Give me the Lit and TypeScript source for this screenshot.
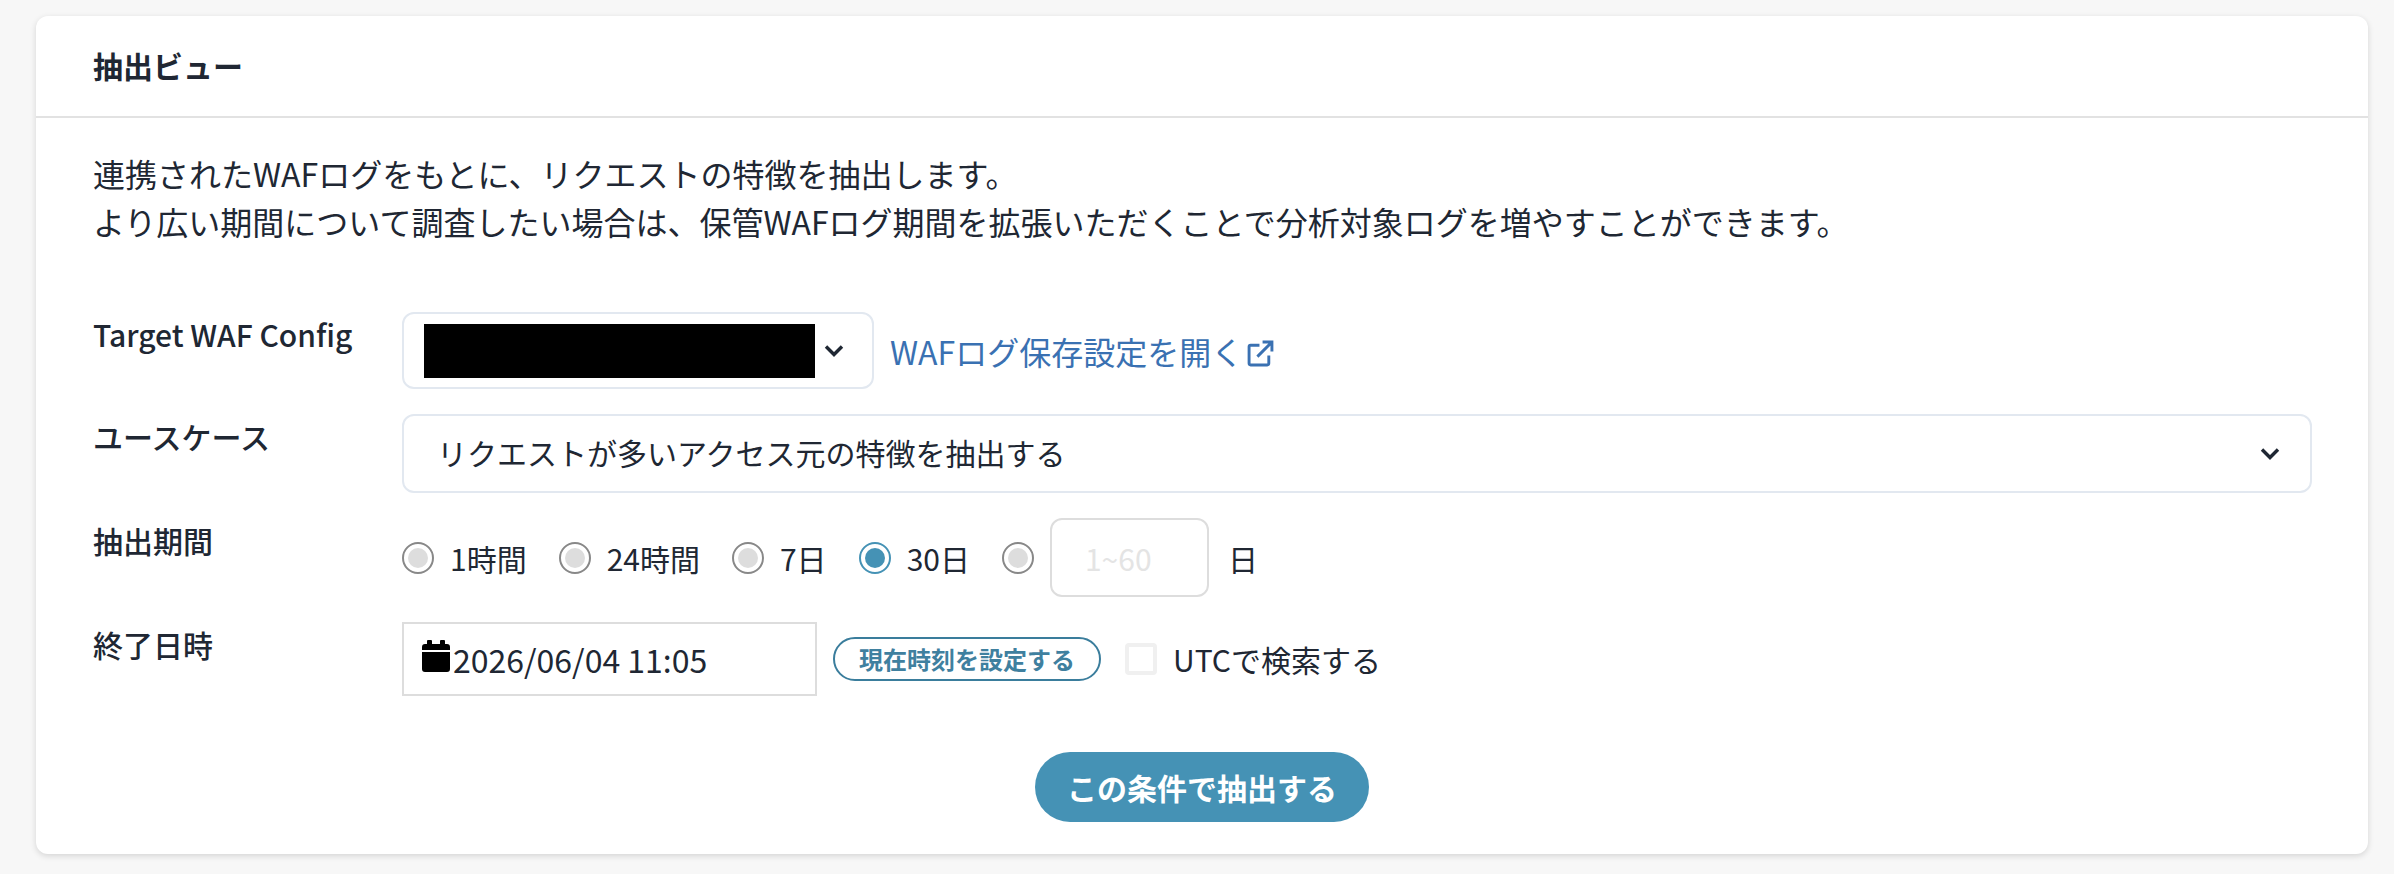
import { LitElement, html, css } from "lit";
import { customElement } from "lit/decorators.js";

const chevron = html`<svg class="chev" viewBox="0 0 20 14" width="20" height="14"><path d="M2 2.5 L10 10.5 L18 2.5" fill="none" stroke="#1f2733" stroke-width="3.4"/></svg>`;

@customElement("app-root")
export class AppRoot extends LitElement {
  static styles = css`
    :host {
      display: block;
      min-height: 874px;
      box-sizing: border-box;
      background: #f7f7f7;
      padding: 16px 26px 20px 36px;
      font-family: "Noto Sans CJK JP", "Noto Sans", sans-serif;
      color: #202733;
      font-size: 32px;
      line-height: 48px;
    }
    .card {
      background: #fff;
      border-radius: 12px;
      box-shadow: 0 2px 6px rgba(0, 0, 0, 0.14);
    }
    .head {
      height: 102px;
      box-sizing: border-box;
      border-bottom: 2px solid #e2e2e2;
      padding: 0 57px 2px;
      display: flex;
      align-items: center;
      font-size: 30px;
      font-weight: 700;
    }
    .body { padding: 31px 57px 32px; }
    .intro { margin: 0 0 67px; }
    .form {
      display: grid;
      grid-template-columns: 309px 1fr;
      row-gap: 25px;
      font-size: 30px;
    }
    .label { font-weight: 500; font-size: 30px; line-height: 44px; }
    .row { display: flex; align-items: center; }
    .select {
      box-sizing: border-box;
      height: 79px;
      border: 2px solid #e2e8f0;
      border-radius: 12px;
      display: flex;
      align-items: center;
      background: #fff;
    }
    .s1 { width: 472px; height: 77px; padding-left: 20px; }
    .mask { width: 391px; height: 54px; background: #000; }
    .s1 .chev { margin-left: 9px; }
    .s2 { width: 1910px; padding: 0 30px 0 33px; justify-content: space-between; font-size: 30px; }
    .s2 span { margin-bottom: 3px; }
    .link {
      margin-left: 16px;
      color: #3a71b2;
      display: flex;
      align-items: center;
      gap: 4px;
      font-size: 32px;
      text-decoration: none;
    }
    .link svg { margin-top: 5px; }
    .radio {
      box-sizing: border-box;
      width: 32px;
      height: 32px;
      border: 2px solid #888;
      border-radius: 50%;
      padding: 4px;
      flex: none;
    }
    .radio i { display: block; width: 100%; height: 100%; border-radius: 50%; background: #ddd; }
    .radio.on { border-color: #4592b5; }
    .radio.on i { background: #4592b5; }
    .opt { display: flex; align-items: center; gap: 16px; margin-right: 32px; }
    .num {
      box-sizing: border-box;
      width: 159px;
      height: 79px;
      border: 2px solid #ddd;
      border-radius: 12px;
      display: flex;
      align-items: center;
      padding-left: 33px;
      color: #e4e4e4;
      margin-left: -16px;
      margin-right: 19px;
    }
    .date {
      box-sizing: border-box;
      width: 415px;
      height: 74px;
      border: 2px solid #ddd;
      display: flex;
      align-items: center;
      padding-left: 18px;
      gap: 3px;
      font-size: 32px;
    }
    .cal { margin-top: -6px; }
    .now {
      box-sizing: border-box;
      margin-left: 16px;
      width: 268px;
      height: 44px;
      border: 2px solid #3a7d9c;
      border-radius: 22px;
      background: #fff;
      color: #3f809f;
      font: 700 24px/1 "Noto Sans CJK JP", sans-serif;
      padding: 0;
    }
    .check {
      box-sizing: border-box;
      width: 32px;
      height: 32px;
      margin-left: 24px;
      border: 4px solid #f0f0f0;
      border-radius: 4px;
    }
    .utc { margin-left: 16px; }
    .actions { display: flex; justify-content: center; margin-top: 56px; }
    .go {
      width: 334px;
      height: 70px;
      border: 0;
      border-radius: 35px;
      background: #4592b5;
      color: #fff;
      font: 700 30px/1 "Noto Sans CJK JP", sans-serif;
      padding: 0;
    }
  `;

  render() {
    const opts = ["1時間", "24時間", "7日", "30日"];
    return html`
      <section class="card">
        <div class="head">抽出ビュー</div>
        <div class="body">
          <p class="intro">連携されたWAFログをもとに、リクエストの特徴を抽出します。<br />より広い期間について調査したい場合は、保管WAFログ期間を拡張いただくことで分析対象ログを増やすことができます。</p>
          <div class="form">
            <div class="label">Target WAF Config</div>
            <div class="row">
              <div class="select s1"><div class="mask"></div>${chevron}</div>
              <a class="link">WAFログ保存設定を開く
                <svg viewBox="0 0 26 26" width="27" height="27" fill="none" stroke="#3a71b2" stroke-width="2.8"><path d="M12 5H3.5A1.5 1.5 0 0 0 2 6.5v16A1.5 1.5 0 0 0 3.5 24h16a1.5 1.5 0 0 0 1.5-1.5V15"/><path d="M10 16 24 2M15 2h9v9"/></svg>
              </a>
            </div>
            <div class="label">ユースケース</div>
            <div class="row"><div class="select s2"><span>リクエストが多いアクセス元の特徴を抽出する</span>${chevron}</div></div>
            <div class="label">抽出期間</div>
            <div class="row">
              ${opts.map((o, i) => html`<div class="opt"><span class="radio ${i === 3 ? "on" : ""}"><i></i></span><span>${o}</span></div>`)}
              <div class="opt"><span class="radio"><i></i></span></div>
              <div class="num">1~60</div>
              <span>日</span>
            </div>
            <div class="label">終了日時</div>
            <div class="row">
              <div class="date">
                <svg class="cal" viewBox="0 0 28 32" width="28" height="32"><path d="M6 0h3a1 1 0 0 1 1 1v3h8V1a1 1 0 0 1 1-1h3a1 1 0 0 1 1 1v3h2a3 3 0 0 1 3 3v3H0V7a3 3 0 0 1 3-3h2V1a1 1 0 0 1 1-1zM0 12h28v17a3 3 0 0 1-3 3H3a3 3 0 0 1-3-3z" fill="#000"/></svg>
                <span>2026/06/04 11:05</span>
              </div>
              <button class="now">現在時刻を設定する</button>
              <span class="check"></span>
              <span class="utc">UTCで検索する</span>
            </div>
          </div>
          <div class="actions"><button class="go">この条件で抽出する</button></div>
        </div>
      </section>
    `;
  }
}
